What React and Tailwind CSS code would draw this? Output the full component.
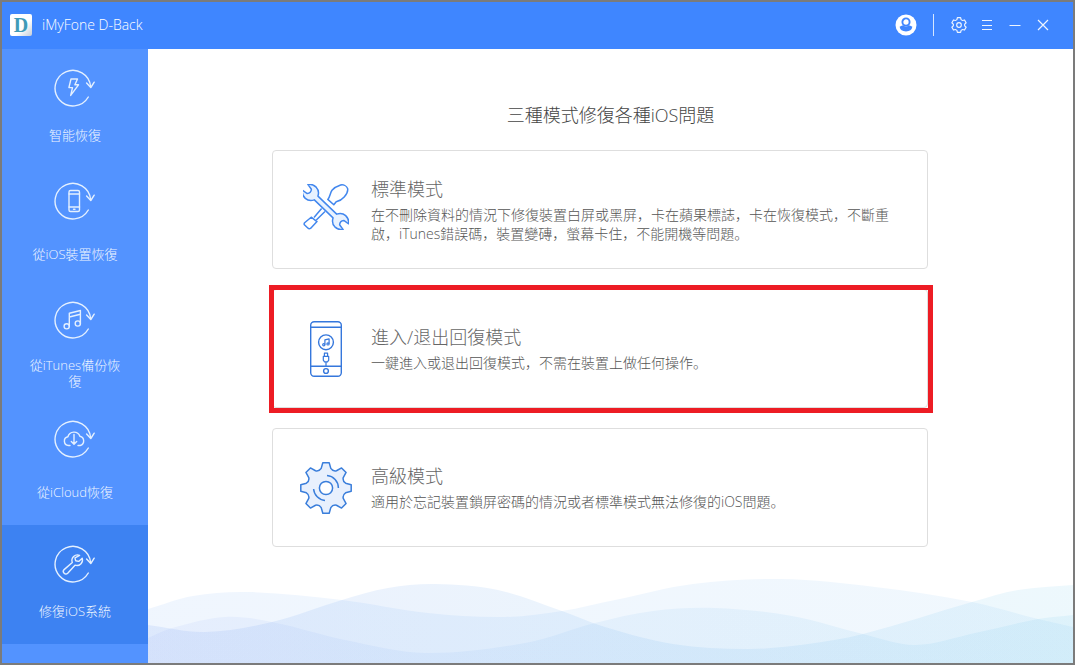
import React, { useState } from "react";

const point = (x, y, angle) => {
  const c = Math.cos(angle);
  const s = Math.sin(angle);
  return `${(x * c - y * s).toFixed(2)} ${(x * s + y * c).toFixed(2)}`;
};

// outline of a gear around 0,0
const gearPath = (teeth, outer, inner, tip, base, valley) => {
  let d = "";
  for (let i = 0; i < teeth; i++) {
    const a = (i * 2 * Math.PI) / teeth;
    d += i === 0 ? `M${point(-base, -inner, a)}` : `A${valley} ${valley} 0 0 0 ${point(-base, -inner, a)}`;
    d += `L${point(-tip, -outer, a)}L${point(tip, -outer, a)}L${point(base, -inner, a)}`;
  }
  return `${d}A${valley} ${valley} 0 0 0 ${point(-base, -inner, 0)}Z`;
};

// smooth curve through the points, closed along the bottom
const wavePath = (pts) => {
  let d = `M${pts[0][0]} ${pts[0][1]}`;
  for (let i = 0; i < pts.length - 1; i++) {
    const p0 = pts[i - 1] || pts[i];
    const p1 = pts[i];
    const p2 = pts[i + 1];
    const p3 = pts[i + 2] || p2;
    const t = (p2[0] - p1[0]) / 3;
    const m1 = (p2[1] - p0[1]) / (p2[0] - p0[0]);
    const m2 = (p3[1] - p1[1]) / (p3[0] - p1[0]);
    d += `C${p1[0] + t} ${p1[1] + m1 * t} ${p2[0] - t} ${p2[1] - m2 * t} ${p2[0]} ${p2[1]}`;
  }
  return `${d}V85H0Z`;
};

const waves = [
  {
    id: "wave-a",
    from: "#69a5f5",
    to: "#6fb9f0",
    pts: [[0, 31], [45, 18], [100, 14], [194, 22], [280, 35], [357, 39], [414, 33], [467, 22], [545, 6], [634, 1], [727, 9], [824, 24], [890, 41], [925, 49]],
  },
  {
    id: "wave-b",
    from: "#3773eb",
    to: "#50bde8",
    pts: [[0, 47], [57, 54], [124, 44], [194, 22], [240, 10], [287, 6], [350, 12], [414, 33], [457, 49], [525, 66], [600, 71], [660, 66], [715, 56], [824, 24], [870, 12], [925, 7]],
  },
  {
    id: "wave-c",
    from: "#8ca5f5",
    to: "#55bde8",
    pts: [[0, 60], [24, 50], [77, 39], [124, 44], [197, 62], [277, 75], [377, 65], [447, 45], [505, 33], [567, 30], [644, 38], [715, 56], [767, 67], [827, 55], [890, 41], [925, 37]],
  },
];

const Waves = () => (
  <svg viewBox="0 0 925 85" preserveAspectRatio="none" className="mt-auto block h-[85px] w-full" aria-hidden="true">
    <defs>
      {waves.map((w) => (
        <linearGradient key={w.id} id={w.id} x1="0" x2="1" y1="0" y2="0">
          <stop offset="0" stopColor={w.from} />
          <stop offset="1" stopColor={w.to} />
        </linearGradient>
      ))}
    </defs>
    {waves.map((w) => (
      <path key={w.id} d={wavePath(w.pts)} fill={`url(#${w.id})`} fillOpacity="0.1" />
    ))}
  </svg>
);

const RoundArrow = ({ children }) => (
  <svg
    width="42"
    height="38"
    viewBox="0 0 42 38"
    fill="none"
    stroke="#e4f0ff"
    strokeWidth="1.4"
    strokeLinecap="round"
    strokeLinejoin="round"
    aria-hidden="true"
  >
    <path d="M34.3 28A17.8 17.8 0 1 1 36.6 17.5" />
    <path d="M32.6 14L36.8 18.5L40.2 13.2" />
    {children}
  </svg>
);

const BoltIcon = () => (
  <RoundArrow>
    <path d="M17 10h6.5l-2.6 5.8h3.6l-7.8 10.6 1.8-7.8h-3.6z" />
  </RoundArrow>
);

const PhoneIcon = () => (
  <RoundArrow>
    <rect x="15" y="8.5" width="10.5" height="21" rx="1.5" />
    <path d="M15 12h10.5M15 25h10.5M19.5 27.3h1.5" />
  </RoundArrow>
);

const MusicIcon = () => (
  <RoundArrow>
    <circle cx="12.7" cy="25.3" r="2.6" />
    <circle cx="23.8" cy="22.5" r="2.6" />
    <path d="M15.3 25.3V12.2L26.4 9.5v13M15.3 16l11.1-2.7" />
  </RoundArrow>
);

const CloudIcon = () => (
  <RoundArrow>
    <path d="M16 25.5h-1.5a4.4 4.4 0 0 1-.6-8.7a6.3 6.3 0 0 1 12-.6a4.8 4.8 0 0 1 .3 9.3H24" />
    <path d="M20 14.5v9.5M17.3 21.5L20 24.2l2.7-2.7" />
  </RoundArrow>
);

const WrenchIcon = () => (
  <RoundArrow>
    <path d="M25.6 10.3a5.6 5.6 0 0 0-7.3 7.2l-8.2 7.1a2.5 2.5 0 0 0 3.6 3.6l7.3-8a5.6 5.6 0 0 0 7.2-7l-3.5 3.2-3.1-.7-.6-2.8z" />
  </RoundArrow>
);

const ToolsIcon = () => (
  <svg width="46" height="46" viewBox="0 0 46 46" fill="#e8f2ff" stroke="#4287ee" strokeWidth="1.5" strokeLinejoin="round" className="mb-1.5" aria-hidden="true">
    <path d="M24.8 15.4C27.4 12.6 27 9 29 6.2C31.4 3.6 34.6 2 37.6 1C40.6 .4 43.6 2 44.6 4.6C45.2 7.4 43.4 10.6 41.2 13C38.8 15.8 36 17.2 33.2 17.8L30.8 20.8Z" fill="#fff" />
    <path d="M18.6 24.6L11 33.5M22 27.5L13.3 36" />
    <path d="M8.2 33.2L14 37.6L7.5 44.4Q6 45.2 4.8 44L1.4 40.8Q.8 39.8 1.6 38.8Z" fill="#fff" />
    <path
      transform="translate(22.5 23) rotate(44)"
      d="M-13-2.6H13Q15.5-7.6 20.5-7.8Q25.5-7.8 28.4-4L22.5-3Q20 0 22.5 3L28.4 4Q25.5 7.8 20.5 7.8Q15.5 7.6 13 2.6H-13Q-15.5 7.6-20.5 7.8Q-25.5 7.8-28.4 4L-22.5 3Q-20 0-22.5-3L-28.4-4Q-25.5-7.8-20.5-7.8Q-15.5-7.6-13-2.6Z"
    />
  </svg>
);

const DeviceIcon = () => (
  <svg width="32" height="56" viewBox="0 0 32 56" fill="none" stroke="#3577dc" strokeWidth="1.4" strokeLinejoin="round" aria-hidden="true">
    <rect x=".7" y=".7" width="30.6" height="54.6" rx="3.5" />
    <path d="M.7 6.3h30.6M.7 45.2h30.6" />
    <circle cx="16" cy="21.3" r="7.4" />
    <g strokeWidth="1.2">
      <circle cx="13.8" cy="23.8" r="1.1" />
      <circle cx="18" cy="22.9" r="1.1" />
      <path d="M14.9 23.8v-5l4.2-1v5" />
      <path d="M14.4 35.4v-3.2h3.2v3.2M13.3 35.4h5.4v3.8l-1.2 1.6h-3l-1.2-1.6zM16 40.8v4.4" />
    </g>
    <circle cx="16" cy="50" r="2.4" />
  </svg>
);

const CogIcon = () => (
  <svg width="52" height="52" viewBox="-26 -26 52 52" fill="none" stroke="#3a7edb" strokeWidth="1.5" strokeLinejoin="round" aria-hidden="true">
    <path d={gearPath(8, 25.2, 19.6, 3.2, 4.8, 5.4)} fill="#e8f0fd" />
    <circle r="6.6" fill="#fff" />
    <path d="M1-12.4A12.4 12.4 0 0 1 12.4 0M-12.4 1A12.4 12.4 0 0 0-1 12.4" />
  </svg>
);

const sideItems = [
  { id: "smart", label: "智能恢復", Icon: BoltIcon, pad: "pt-5" },
  { id: "device", label: "從iOS裝置恢復", Icon: PhoneIcon, pad: "pt-3.5" },
  { id: "itunes", label: "從iTunes備份恢復", Icon: MusicIcon, pad: "pt-3.5" },
  { id: "icloud", label: "從iCloud恢復", Icon: CloudIcon, pad: "pt-3.5" },
  { id: "repair", label: "修復iOS系統", Icon: WrenchIcon, pad: "pt-5" },
];

const modes = [
  {
    id: "standard",
    title: "標準模式",
    text: "在不刪除資料的情況下修復裝置白屏或黑屏，卡在蘋果標誌，卡在恢復模式，不斷重啟，iTunes錯誤碼，裝置變磚，螢幕卡住，不能開機等問題。",
    Icon: ToolsIcon,
  },
  {
    id: "recovery",
    title: "進入/退出回復模式",
    text: "一鍵進入或退出回復模式，不需在裝置上做任何操作。",
    Icon: DeviceIcon,
  },
  {
    id: "advanced",
    title: "高級模式",
    text: "適用於忘記裝置鎖屏密碼的情況或者標準模式無法修復的iOS問題。",
    Icon: CogIcon,
  },
];

const Header = () => (
  <header className="flex h-[47px] shrink-0 items-center bg-[#3f86ff] pr-6 pb-0.5 pl-2">
    <div className="flex h-[22px] w-[22px] items-center justify-center rounded-xs bg-linear-to-br from-white from-60% to-[#c3ccd8] font-['Liberation_Serif',serif] text-[20px] leading-none font-bold text-[#3f9bb8]">
      D
    </div>
    <span className="ml-2.5 text-[14px] text-white">iMyFone D-Back</span>

    <div className="ml-auto flex items-center text-[#eef5ff]">
      <button aria-label="Account" className="cursor-pointer">
        <svg width="22" height="22" viewBox="0 0 22 22">
          <circle cx="11" cy="11" r="10.5" fill="#fff" />
          <circle cx="11" cy="8" r="3.6" fill="none" stroke="#3f86ff" strokeWidth="1.9" />
          <path d="M4.6 12.8Q5.4 17.4 11 17.4T17.4 12.8Q15 11.4 13.9 11.2Q11 13.6 8.1 11.2Q7 11.4 4.6 12.8Z" fill="#3f86ff" />
        </svg>
      </button>
      <span className="ml-4 h-[22px] w-px bg-[#d5e6ff]" />
      <button aria-label="Settings" className="ml-[17px] cursor-pointer">
        <svg width="16" height="16" viewBox="-8 -8 16 16" fill="none" stroke="currentColor" strokeWidth="1.2" strokeLinejoin="round">
          <path d={gearPath(6, 7.3, 5.4, 1.6, 2.1, 4)} />
          <circle r="2.3" />
        </svg>
      </button>
      <button aria-label="Menu" className="ml-3.5 cursor-pointer">
        <svg width="12" height="12" viewBox="0 0 12 12" fill="none" stroke="currentColor">
          <path d="M1 1.5h10M1 6.5h10M1 10.5h10" />
        </svg>
      </button>
      <button aria-label="Minimize" className="ml-4 cursor-pointer">
        <svg width="12" height="12" viewBox="0 0 12 12" fill="none" stroke="currentColor">
          <path d="M.5 6.5h11" />
        </svg>
      </button>
      <button aria-label="Close" className="ml-4 cursor-pointer">
        <svg width="12" height="12" viewBox="0 0 12 12" fill="none" stroke="currentColor" strokeWidth="1.2">
          <path d="M1 1l10 10M11 1L1 11" />
        </svg>
      </button>
    </div>
  </header>
);

const Sidebar = ({ active, onSelect }) => (
  <nav className="flex w-[146px] shrink-0 flex-col bg-[#5393ff]">
    {sideItems.map(({ id, label, Icon, pad }) => (
      <button
        key={id}
        onClick={() => onSelect(id)}
        className={`flex h-[119px] cursor-pointer flex-col items-center ${
          active === id ? "bg-[#3d82f2]" : "hover:bg-[#4a8bfa]"
        }`}
      >
        <span className={`flex h-[66px] ${pad}`}>
          <Icon />
        </span>
        <span className="flex h-10 w-[92px] items-center justify-center text-center text-[13px] leading-4 break-all text-[#f0f6ff]">
          {label}
        </span>
      </button>
    ))}
  </nav>
);

const ModeCard = ({ mode, highlighted }) => {
  const { title, text, Icon } = mode;

  return (
    <button className="relative flex h-[119px] w-full cursor-pointer items-center rounded-sm border border-[#dedede] bg-white pr-9 text-left">
      <span className="flex w-[98px] shrink-0 justify-center pl-2">
        <Icon />
      </span>
      <span className="flex flex-col gap-0.5 pb-0.5">
        <span className="text-[18px] leading-7 text-[#666]">{title}</span>
        <span className="text-[14px] leading-[19px] text-[#555]">{text}</span>
      </span>
      {highlighted && (
        <span className="pointer-events-none absolute -top-[5px] -right-1.5 -bottom-1.5 -left-1 border-5 border-[#ed1c24]" />
      )}
    </button>
  );
};

const App = () => {
  const [active, setActive] = useState("repair");

  return (
    <div className="flex min-h-screen flex-col border-2 border-[#7b7b7b] bg-white font-['Open_Sans','Noto_Sans_CJK_SC',sans-serif] font-light">
      <Header />
      <div className="flex flex-1">
        <Sidebar active={active} onSelect={setActive} />
        <main className="flex min-w-0 flex-1 flex-col">
          <h1 className="mt-[52px] text-center text-[18px] leading-7 text-[#444]">三種模式修復各種iOS問題</h1>
          <div className="mt-[21px] flex flex-col gap-5 pr-[145px] pl-[124px]">
            {modes.map((mode) => (
              <ModeCard key={mode.id} mode={mode} highlighted={mode.id === "recovery"} />
            ))}
          </div>
          <Waves />
        </main>
      </div>
    </div>
  );
};

export default App;
